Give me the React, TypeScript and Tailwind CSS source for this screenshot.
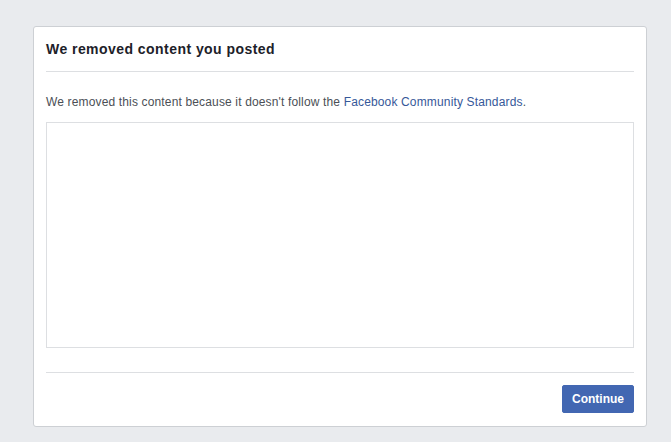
export default function App() {
  return (
    <div className="min-h-screen w-full bg-[#e9ebee] pt-[26px] pl-[33px] font-['Liberation_Sans',Arial,sans-serif]">
      <div className="w-[614px] h-[401px] bg-white border border-[#cdd0d4] rounded-[3px] px-3 flex flex-col">
        {/* header */}
        <div className="pt-[13px] pb-[13px] border-b border-[#dddfe2]">
          <h1 className="text-[14px] leading-[18px] font-bold text-[#1d2129] tracking-[0.45px]">We removed content you posted</h1>
        </div>

        {/* body */}
        <p className="mt-[22px] text-[12px] leading-[16px] text-[#4b4f56] tracking-[0.15px]">
          We removed this content because it doesn't follow the{' '}
          <span className="text-[#365899]">Facebook Community Standards</span>.
        </p>
        <div className="mt-[12px] h-[226px] border border-[#dddfe2] bg-white" />

        {/* footer */}
        <div className="mt-[24px] border-t border-[#dddfe2] pt-[12px] flex justify-end">
          <button className="h-[28px] w-[72px] rounded-[2px] bg-[#4267b2] border border-[#4267b2] text-white text-[12px] font-bold">
            Continue
          </button>
        </div>
      </div>
    </div>
  );
}
